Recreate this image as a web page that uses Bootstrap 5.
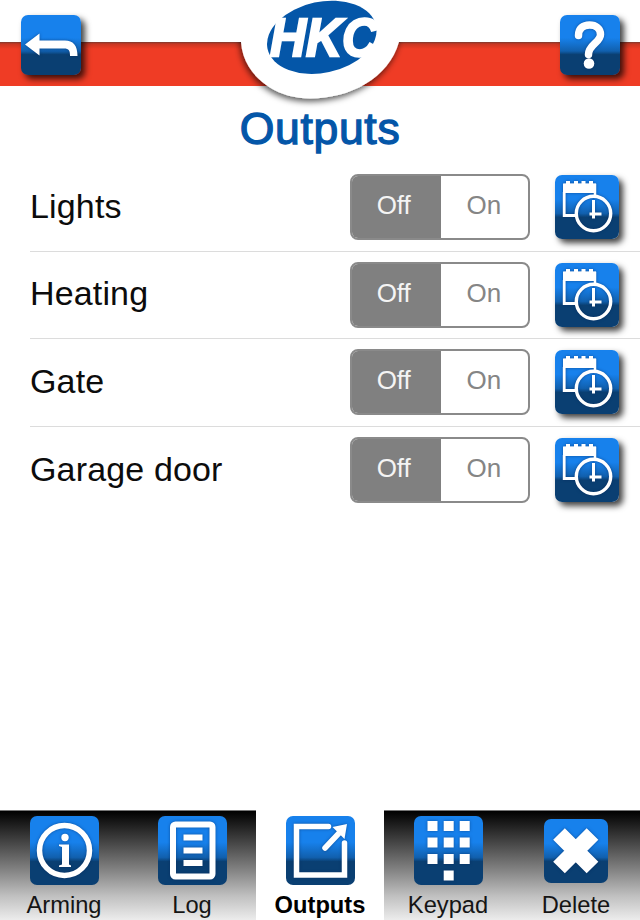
<!DOCTYPE html>
<html lang="en">
<head>
<meta charset="utf-8">
<meta name="viewport" content="width=device-width, initial-scale=1">
<title>Outputs</title>
<link href="https://cdn.jsdelivr.net/npm/bootstrap@5.3.0/dist/css/bootstrap.min.css" rel="stylesheet">
<style>
body { font-family: "Liberation Sans", Arial, sans-serif; background: #fff; color: #111; }
.app-shell { height: 920px; width: 640px; overflow: hidden; }
.app-head { height: 104px; padding: 15px 20px 0 20.5px; background: linear-gradient(#fff 42px, #7c3a30 42px, #c93622 44px, #ef3c25 49px, #ef3c25 86.500px, #fff 86.500px); }
.app-logo { position: absolute; left: 220px; top: 0; }
.tile { background: linear-gradient(#1781ec 0, #1781ec 38%, #1160ae 60%, #0a3f72 66%, #0a3f72 100%); border-radius: 7px; padding: 0; border: 0; display: block; flex: none; }
.tile svg { display: block; width: 100%; height: 100%; fill: none; stroke: #fff; filter: drop-shadow(0 0 1.5px rgba(0,30,80,.5)); }
.tile-sm { width: 60px; height: 60px; }
.tile-md { width: 64px; height: 64px; }
.tile-lg { width: 69px; height: 69px; }
.lifted { box-shadow: 4px 4px 6px rgba(0,0,0,.75); }
.page-title { color: #0456a8; font-size: 44.5px; line-height: 50px; height: 60px; letter-spacing: .7px; -webkit-text-stroke: 1.3px #0456a8; }
.out-row { height: 87.5px; margin-left: 30px; padding: 0 21px 0 0; border-color: #dcdcdc; border-width: 0 0 1.5px; font-size: 34px; }
.out-row:last-child { border-bottom-color: transparent; }
.out-name { color: #0c0c0c; letter-spacing: .15px; padding-bottom: 2px; }
.switch-pair { width: 180px; height: 66px; margin-right: 25px; border: 2px solid #8a8a8a; border-radius: 8px; overflow: hidden; }
.switch-pair .btn { font-size: 26px; line-height: 1; border: 0; border-radius: 0; padding: 0 0 4px; color: #858585; }
.switch-pair .btn.active { background: #808080; color: #f4f4f4; padding-right: 5px; }
.tab-strip { height: 110px; border-top: 1px solid #777; background: linear-gradient(#000, #484848 30%, #858585 55%, #c0c0c0 78%, #ececec); }
.tab-strip .nav-link { width: 128px; height: 110px; margin-top: -1px; padding: 6px 0 0; color: #151515; font-size: 23.7px; }
.tab-strip .nav-link.active { background: #fff; color: #000; font-weight: 700; }
.tab-pic { height: 69px; }
.tab-strip .tab-text { line-height: 26px; margin-top: 7px; }
</style>
<script src="https://cdn.jsdelivr.net/npm/bootstrap@5.3.0/dist/js/bootstrap.bundle.min.js"></script>
</head>
<body>
<svg class="d-none" aria-hidden="true">
  <symbol id="schedule" viewBox="0 0 64 64">
    <path d="M9.200 10H40v12" stroke-width="2.500"/>
    <path d="M8 8.500h33v9.500H8z" fill="#fff" stroke="none"/>
    <path d="M13 6v5M21 6v5M28.500 6v5M36 6v5" stroke-width="4"/>
    <path d="M9.200 17v23.500H22" stroke-width="2.800"/>
    <circle cx="38.500" cy="38.500" r="17.200" stroke-width="3.400"/>
    <path d="M38.500 25v18.500M34.500 39h12" stroke-width="3"/>
  </symbol>
</svg>
<div class="app-shell d-flex flex-column position-relative">
  <header class="app-head d-flex justify-content-between align-items-start">
    <button class="tile tile-sm lifted" type="button" aria-label="Back">
      <svg viewBox="0 0 60 60"><path d="M4 29.500 18.500 18.500V25.500H44C52 25.500 56.500 30 56.500 41H49C49 35.500 48 33.500 43 33.500H18.500V40.500Z" fill="#fff" stroke="none"/></svg>
    </button>
    <svg class="app-logo" width="200" height="110" viewBox="220 0 200 110" role="img">
      <defs>
        <filter id="logoShade" x="-20%" y="-20%" width="140%" height="150%"><feDropShadow dx="-1" dy="3" stdDeviation="3" flood-opacity=".65"/></filter>
        <clipPath id="belowBar"><path d="M220 42H420V110H220Z"/></clipPath>
      </defs>
      <g clip-path="url(#belowBar)"><path d="M241 30V42C243 74 273 98.500 310 98.500C350 98.500 389 78 399 42V30Z" fill="#fff" filter="url(#logoShade)"/></g>
      <ellipse cx="321.800" cy="37.300" rx="55.500" ry="35.500" transform="rotate(-12 321.800 37.300)" fill="#0456a8"/>
      <text transform="translate(270 55.500)" x="0" y="0" font-family="Liberation Sans, Arial, sans-serif" font-weight="700" font-style="italic" font-size="53" textLength="108" lengthAdjust="spacingAndGlyphs" fill="#fff" stroke="#fff" stroke-width="2.400">HKC</text>
    </svg>
    <button class="tile tile-sm lifted" type="button" aria-label="Help">
      <svg viewBox="0 0 60 60"><path d="M18.500 20.500C18.500 13.500 23 10 29.500 10C36 10 40.500 13.500 40.500 19.500C40.500 27.500 28.500 29.500 28.500 39.500" stroke-width="7.500" stroke-linecap="round"/><circle cx="29" cy="48.500" r="5.300" fill="#fff" stroke="none"/></svg>
    </button>
  </header>
  <h1 class="page-title text-center m-0 fw-normal">Outputs</h1>
  <main class="flex-grow-1">
    <div class="list-group list-group-flush">
      <div class="list-group-item out-row d-flex align-items-center">
        <span class="out-name me-auto">Lights</span>
        <div class="btn-group switch-pair"><button class="btn active w-50">Off</button><button class="btn w-50">On</button></div>
        <button class="tile tile-md lifted" aria-label="Schedule"><svg><use href="#schedule"/></svg></button>
      </div>
      <div class="list-group-item out-row d-flex align-items-center">
        <span class="out-name me-auto">Heating</span>
        <div class="btn-group switch-pair"><button class="btn active w-50">Off</button><button class="btn w-50">On</button></div>
        <button class="tile tile-md lifted" aria-label="Schedule"><svg><use href="#schedule"/></svg></button>
      </div>
      <div class="list-group-item out-row d-flex align-items-center">
        <span class="out-name me-auto">Gate</span>
        <div class="btn-group switch-pair"><button class="btn active w-50">Off</button><button class="btn w-50">On</button></div>
        <button class="tile tile-md lifted" aria-label="Schedule"><svg><use href="#schedule"/></svg></button>
      </div>
      <div class="list-group-item out-row d-flex align-items-center">
        <span class="out-name me-auto">Garage door</span>
        <div class="btn-group switch-pair"><button class="btn active w-50">Off</button><button class="btn w-50">On</button></div>
        <button class="tile tile-md lifted" aria-label="Schedule"><svg><use href="#schedule"/></svg></button>
      </div>
    </div>
  </main>
  <nav class="nav tab-strip flex-nowrap">
    <a class="nav-link d-flex flex-column align-items-center" href="#">
      <span class="tab-pic d-flex align-items-center"><span class="tile tile-lg"><svg viewBox="0 0 69 69"><circle cx="34.500" cy="34.500" r="25" stroke-width="5.500"/><circle cx="35" cy="21.500" r="3.700" fill="#fff" stroke="none"/><path d="M29 28.500H39V48.500L41 49.500V51H29V49.500L32 48.500V31L29 30Z" fill="#fff" stroke="none"/></svg></span></span>
      <span class="tab-text">Arming</span>
    </a>
    <a class="nav-link d-flex flex-column align-items-center" href="#">
      <span class="tab-pic d-flex align-items-center"><span class="tile tile-lg"><svg viewBox="0 0 69 69"><rect x="15" y="8.500" width="39.500" height="52" rx="2.500" stroke-width="6"/><path d="M25.500 21.500h19M25.500 34.500h19M25.500 47h19" stroke-width="6"/></svg></span></span>
      <span class="tab-text">Log</span>
    </a>
    <a class="nav-link active d-flex flex-column align-items-center" href="#">
      <span class="tab-pic d-flex align-items-center"><span class="tile tile-lg"><svg viewBox="0 0 69 69"><path d="M42.500 10.500H10.500V59H58.500V27" stroke-width="5.500" stroke-linecap="round"/><path d="M39 32 55 15" stroke-width="5.500" stroke-linecap="round"/><path d="M61 8 58.500 23 46.500 11Z" fill="#fff" stroke="none"/></svg></span></span>
      <span class="tab-text">Outputs</span>
    </a>
    <a class="nav-link d-flex flex-column align-items-center" href="#">
      <span class="tab-pic d-flex align-items-center"><span class="tile tile-lg"><svg viewBox="0 0 69 69"><path d="M13.500 10h10M29.700 10h10M45.700 10h10M13.500 26.500h10M29.700 26.500h10M45.700 26.500h10M13.500 43h10M29.700 43h10M45.700 43h10M29.700 59.500h10" stroke-width="10"/></svg></span></span>
      <span class="tab-text">Keypad</span>
    </a>
    <a class="nav-link d-flex flex-column align-items-center" href="#">
      <span class="tab-pic d-flex align-items-center"><span class="tile tile-md"><svg viewBox="0 0 64 64"><path d="M15 15 48.500 48.500M48.500 15 15 48.500" stroke-width="16.500" stroke-linejoin="round"/></svg></span></span>
      <span class="tab-text">Delete</span>
    </a>
  </nav>
</div>
</body>
</html>
